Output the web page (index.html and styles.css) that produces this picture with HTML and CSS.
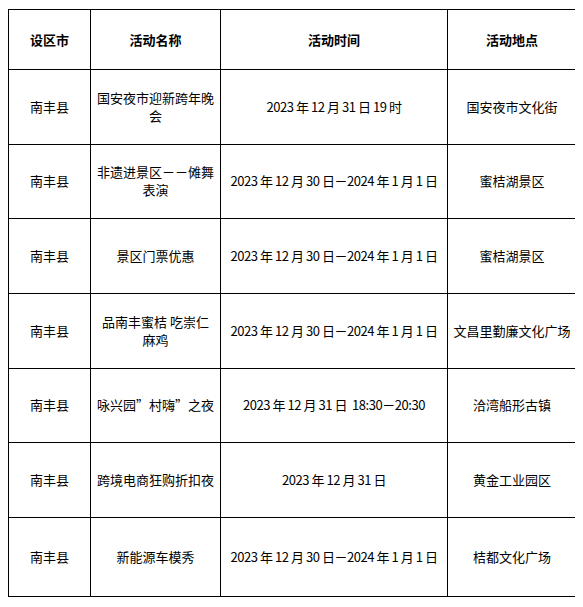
FILE: index.html
```html
<!DOCTYPE html>
<html lang="zh-CN">
<head>
<meta charset="utf-8">
<title>活动安排</title>
<link rel="stylesheet" href="styles.css">
</head>
<body>
<table class="events">
  <colgroup>
    <col class="c-city">
    <col class="c-name">
    <col class="c-time">
    <col class="c-place">
  </colgroup>
  <thead>
    <tr class="head">
      <th>设区市</th>
      <th>活动名称</th>
      <th>活动时间</th>
      <th>活动地点</th>
    </tr>
  </thead>
  <tbody>
    <tr>
      <td>南丰县</td>
      <td>国安夜市迎新跨年晚会</td>
      <td class="date">2023 年 12 月 31 日 19 时</td>
      <td>国安夜市文化街</td>
    </tr>
    <tr>
      <td>南丰县</td>
      <td>非遗进景区－－傩舞表演</td>
      <td class="date">2023 年 12 月 30 日－2024 年 1 月 1 日</td>
      <td>蜜桔湖景区</td>
    </tr>
    <tr>
      <td>南丰县</td>
      <td>景区门票优惠</td>
      <td class="date">2023 年 12 月 30 日－2024 年 1 月 1 日</td>
      <td>蜜桔湖景区</td>
    </tr>
    <tr>
      <td>南丰县</td>
      <td>品南丰蜜桔 吃崇仁麻鸡</td>
      <td class="date">2023 年 12 月 30 日－2024 年 1 月 1 日</td>
      <td>文昌里勤廉文化广场</td>
    </tr>
    <tr>
      <td>南丰县</td>
      <td>咏兴园”村嗨”之夜</td>
      <td class="date">2023 年 12 月 31 日 &nbsp;18:30－20:30</td>
      <td>洽湾船形古镇</td>
    </tr>
    <tr>
      <td>南丰县</td>
      <td>跨境电商狂购折扣夜</td>
      <td class="date">2023 年 12 月 31 日</td>
      <td>黄金工业园区</td>
    </tr>
    <tr class="last">
      <td>南丰县</td>
      <td>新能源车模秀</td>
      <td class="date">2023 年 12 月 30 日－2024 年 1 月 1 日</td>
      <td>桔都文化广场</td>
    </tr>
  </tbody>
</table>
</body>
</html>
```

FILE: styles.css
```css
html, body {
  background: #ffffff;
}

body {
  margin: 9px 8px 8px 8px;
  font-family: "Noto Sans CJK SC", "Noto Sans", sans-serif;
  font-size: 13px;
  line-height: 18px;
  color: #000000;
}

.events {
  width: 568px;
  border-collapse: collapse;
  table-layout: fixed;
}

.c-city { width: 82px; }
.c-name { width: 130px; }
.c-time { width: 227px; }
.c-place { width: 129px; }

.events th,
.events td {
  border: 1px solid #000000;
  text-align: center;
  vertical-align: middle;
  padding: 0 5px;
}

.events th {
  font-weight: 700;
}

.events tr {
  height: 74.67px;
}

.events tr.head {
  height: 60px;
}

.events tr.last {
  height: 79px;
}

.date {
  white-space: nowrap;
  letter-spacing: -0.45px;
}
```
